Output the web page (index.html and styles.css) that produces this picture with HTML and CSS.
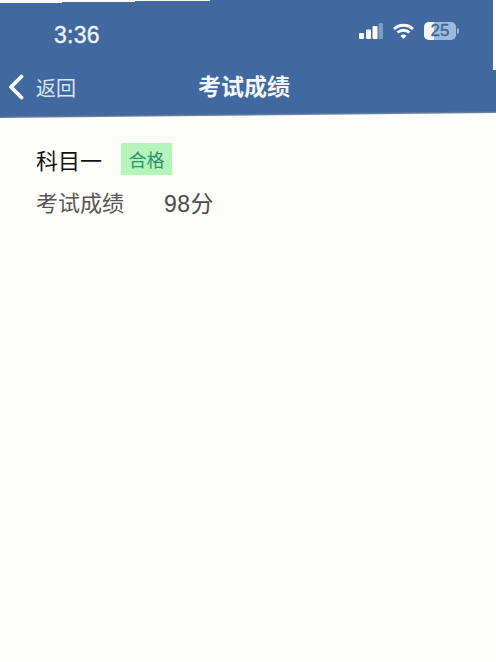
FILE: index.html
```html
<!DOCTYPE html>
<html lang="zh">
<head>
<meta charset="utf-8">
<title>考试成绩</title>
<link rel="stylesheet" href="styles.css">
</head>
<body>
<div class="page">
  <header class="header">
    <div class="status">
      <span class="time">3:36</span>
      <div class="status-icons">
        <svg class="signal" width="24" height="16" viewBox="0 0 24 16"><rect x="0" y="10" width="5" height="6" rx="1" fill="#fff"/><rect x="7" y="6.500" width="5" height="9.500" rx="1" fill="#fff"/><rect x="13.500" y="3" width="5" height="13" rx="1" fill="#fff"/><rect x="19.500" y="0" width="4.500" height="16" rx="1" fill="#7f9ac4"/></svg>
        <svg class="wifi" width="21" height="16" viewBox="0 0 21 16" fill="none" stroke="#fff" stroke-width="2.800"><path d="M1 6C6.500 1 14.500 1 20 6"/><path d="M4.500 9.500C8 6.500 13 6.500 16.500 9.500"/><path d="M10.500 16L7.500 12.800C9.300 11.200 11.700 11.200 13.500 12.800Z" fill="#fff" stroke="none"/></svg>
        <div class="battery"><div class="battery-fill"></div><span class="battery-num">25</span></div>
        <span class="battery-nub"></span>
      </div>
    </div>
    <div class="nav">
      <div class="back">
        <svg width="16" height="26" viewBox="0 0 16 26" fill="none" stroke="#fff" stroke-width="3.800" stroke-linecap="round" stroke-linejoin="round"><path d="M13.500 2.500L3 13L13.500 23.500"/></svg>
        <span class="back-text">返回</span>
      </div>
      <h1 class="title">考试成绩</h1>
    </div>
  </header>
  <main class="content">
    <div class="subject-row">
      <span class="subject">科目一</span>
      <span class="tag">合格</span>
    </div>
    <div class="score-row">
      <span class="score-label">考试成绩</span>
      <span class="score-value">98分</span>
    </div>
  </main>
</div>
</body>
</html>
```
FILE: styles.css
```css
* { box-sizing: border-box; }
html, body { margin: 0; height: 100%; }
body {
  background: #fdfef9;
  font-family: "Liberation Sans", "Noto Sans CJK SC", sans-serif;
  overflow: hidden;
}
.page { width: 496px; height: 662px; }
.header {
  height: 119px;
  background: linear-gradient(179.4deg, #41689f 116px, #76879f 118px);
  color: #fff;
  padding: 0 37px 0 8px;
  clip-path: polygon(0 3px, 62px 3px, 62px 2px, 135px 2px, 135px 1px, 210px 1px, 210px 0, 493px 0, 493px 70px, 100% 70px, 100% 113px, 0 118px);
}
.status {
  height: 64px;
  display: flex;
  align-items: flex-start;
  justify-content: space-between;
}
.time {
  margin: 22px 0 0 46px;
  font-size: 23px;
  line-height: 26px;
  letter-spacing: 0.3px;
  color: #eef3f9;
  -webkit-text-stroke: 0.4px #eef3f9;
}
.status-icons {
  display: flex;
  align-items: center;
  gap: 10px;
  margin-top: 22px;
}
.battery {
  position: relative;
  width: 32px;
  height: 18px;
  border-radius: 5px;
  background: #9dbad9;
  overflow: hidden;
  display: flex;
  align-items: center;
  justify-content: center;
}
.battery-fill {
  position: absolute;
  left: 0; top: 0; bottom: 0;
  width: 10px;
  background: #f4f7fa;
}
.battery-num {
  position: relative;
  font-size: 17px;
  color: #3f6397;
  -webkit-text-stroke: 0.3px #3f6397;
}
.battery-nub {
  width: 2px;
  height: 6px;
  margin-left: -9px;
  border-radius: 0 2px 2px 0;
  background: #9dbad9;
}
.nav {
  position: relative;
  display: flex;
  align-items: center;
  height: 46px;
}
.back { display: flex; align-items: center; gap: 12px; }
.back-text {
  font-size: 20px;
  color: #dbe6f3;
}
.title {
  position: absolute;
  left: 190px;
  top: 7px;
  margin: 0;
  font-size: 23px;
  line-height: 32px;
  font-weight: 700;
  color: #f4f7fb;
}
.content { padding: 24px 0 0 36px; }
.subject-row {
  display: flex;
  align-items: center;
  gap: 19px;
  height: 32px;
}
.subject { font-size: 22px; color: #111; }
.tag {
  width: 51px;
  height: 32px;
  background: #b4f5bc;
  color: #2f8f6f;
  font-size: 18px;
  display: flex;
  align-items: center;
  justify-content: center;
}
.score-row {
  margin-top: 14px;
  display: flex;
  align-items: center;
  gap: 40px;
  color: #555;
  font-size: 22px;
  line-height: 30px;
}
.score-value { font-size: 23px; letter-spacing: 0.5px; color: #4a4a4a; }
```
